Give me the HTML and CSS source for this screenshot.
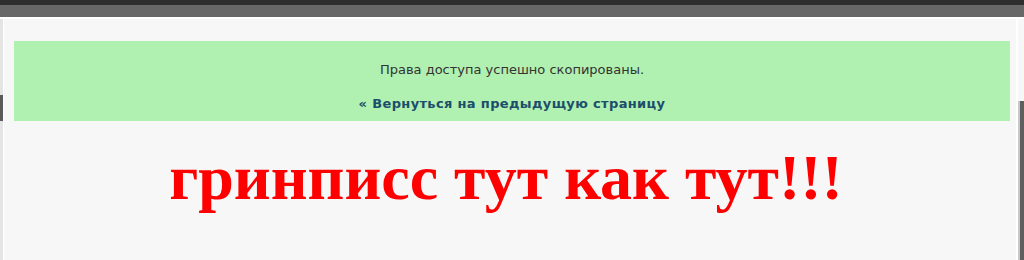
FILE: index.html
```html
<!DOCTYPE html>
<html>
<head>
    <title>Права доступа</title>
    <link rel="stylesheet" href="styles.css">
</head>
<body>
    <div class="topbar"></div>
    <div class="toolbar"></div>

    <div class="window">
        <div class="side-left"><span class="side-tab"></span></div>
        <div class="page">
            <div class="message">
                <p>Права доступа успешно скопированы.</p>
                <a href="#" class="back-link">&laquo; Вернуться на предыдущую страницу</a>
            </div>
            <h1 class="shout">гринписс тут как тут!!!</h1>
        </div>
        <div class="side-right"><span class="scroll"></span></div>
    </div>
</body>
</html>
```

FILE: styles.css
```css
body {
    margin: 0;
    padding: 0;
    height: 260px;
    overflow: hidden;
    background-color: #f7f7f8;
    font-family: Verdana, "DejaVu Sans", sans-serif;
}

.topbar {
    height: 5px;
    background-color: #2e2e2e;
}
.toolbar {
    height: 12px;
    background-color: #676767;
    border-bottom: 2px solid #ffffff;
}

.window {
    display: flex;
    height: 241px;
}

.side-left {
    width: 3px;
    background-color: #e4e4e4;
    border-right: 1px solid #ffffff;
    padding-top: 76px;
}
.side-tab {
    display: block;
    height: 26px;
    background-color: #5a5a5a;
}

.page {
    flex: 1;
    padding: 22px 6px 0 10px;
}

.message {
    background-color: #b0f0b0;
    height: 80px;
    text-align: center;
    font-size: 13px;
    color: #333333;
    padding-top: 1px;
    box-sizing: border-box;
}
.message p {
    margin: 20px 0 0 0;
    line-height: 16px;
}
.back-link {
    display: inline-block;
    margin-top: 18px;
    line-height: 16px;
    font-weight: bold;
    letter-spacing: 0.35px;
    color: #1b4e6a;
    text-decoration: none;
}

.shout {
    margin: 17px 0 0 0;
    padding-right: 12px;
    text-align: center;
    font-family: "Liberation Serif", "Times New Roman", serif;
    font-weight: bold;
    font-size: 64px;
    line-height: 80px;
    color: #ff0000;
}

.side-right {
    width: 6px;
    border-left: 2px solid #ffffff;
    display: flex;
    justify-content: flex-end;
    padding-top: 82px;
}
.scroll {
    display: block;
    width: 4px;
    background-color: #5e5e5e;
    border-left: 2px solid #c8c8c8;
}
```
